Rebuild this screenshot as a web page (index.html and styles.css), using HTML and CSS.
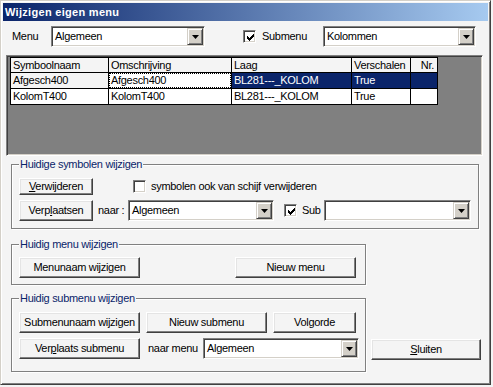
FILE: index.html
```html
<!DOCTYPE html>
<html lang="nl">
<head>
    <meta charset="UTF-8">
    <meta name="viewport" content="width=device-width, initial-scale=1.0">
    <title>Wijzigen eigen menu</title>
    <link rel="stylesheet" href="styles.css">
</head>
<body>
    <div class="window">
        <div class="titlebar">Wijzigen eigen menu</div>

        <div class="client">
            <div class="top-row">
                <span class="label label-menu">Menu</span>
                <div class="combo combo-menu">
                    <span class="combo-text">Algemeen</span>
                    <span class="combo-btn"><svg width="7" height="4" viewBox="0 0 7 4"><path d="M0 0h7l-3.5 4z"/></svg></span>
                </div>
                <span class="check check-submenu"><svg width="9" height="9" viewBox="0 0 9 9" shape-rendering="crispEdges"><path d="M1 3h1v1h1v1h1v-1h1v-1h1v-1h1v-1h1v3h-1v1h-1v1h-1v1h-1v1h-1v-1h-1v-1h-1z"/></svg></span>
                <span class="label label-submenu">Submenu</span>
                <div class="combo combo-submenu">
                    <span class="combo-text">Kolommen</span>
                    <span class="combo-btn"><svg width="7" height="4" viewBox="0 0 7 4"><path d="M0 0h7l-3.5 4z"/></svg></span>
                </div>
            </div>

            <div class="grid-box">
                <div class="grid">
                    <div class="cell head">Symboolnaam</div>
                    <div class="cell head">Omschrijving</div>
                    <div class="cell head">Laag</div>
                    <div class="cell head">Verschalen</div>
                    <div class="cell head nr">Nr.</div>

                    <div class="cell fixed">Afgesch400</div>
                    <div class="cell focus">Afgesch400</div>
                    <div class="cell sel">BL281---_KOLOM</div>
                    <div class="cell sel">True</div>
                    <div class="cell sel"></div>

                    <div class="cell">KolomT400</div>
                    <div class="cell">KolomT400</div>
                    <div class="cell">BL281---_KOLOM</div>
                    <div class="cell">True</div>
                    <div class="cell"></div>
                </div>
            </div>

            <fieldset class="group group-symbols">
                <legend>Huidige symbolen wijzigen</legend>
                <div class="row row-delete">
                    <button class="btn btn-delete"><u>V</u>erwijderen</button>
                    <span class="check check-disk"></span>
                    <span class="label label-disk">symbolen ook van schijf verwijderen</span>
                </div>
                <div class="row row-move">
                    <button class="btn btn-move">Verp<u>l</u>aatsen</button>
                    <span class="label label-naar">naar :</span>
                    <div class="combo combo-naar">
                        <span class="combo-text">Algemeen</span>
                        <span class="combo-btn"><svg width="7" height="4" viewBox="0 0 7 4"><path d="M0 0h7l-3.5 4z"/></svg></span>
                    </div>
                    <span class="check check-sub"><svg width="9" height="9" viewBox="0 0 9 9" shape-rendering="crispEdges"><path d="M1 3h1v1h1v1h1v-1h1v-1h1v-1h1v-1h1v3h-1v1h-1v1h-1v1h-1v1h-1v-1h-1v-1h-1z"/></svg></span>
                    <span class="label label-sub">Sub</span>
                    <div class="combo combo-sub">
                        <span class="combo-text"></span>
                        <span class="combo-btn"><svg width="7" height="4" viewBox="0 0 7 4"><path d="M0 0h7l-3.5 4z"/></svg></span>
                    </div>
                </div>
            </fieldset>

            <div class="lower">
                <div class="lower-groups">
                    <fieldset class="group group-menu">
                        <legend>Huidig menu wijzigen</legend>
                        <div class="row row-spread">
                            <button class="btn btn-wide">Menunaam wijzigen</button>
                            <button class="btn btn-new-menu">Nieuw menu</button>
                        </div>
                    </fieldset>

                    <fieldset class="group group-submenu">
                        <legend>Huidig submenu wijzigen</legend>
                        <div class="row">
                            <button class="btn btn-wide">Submenunaam wijzigen</button>
                            <button class="btn btn-new-sub">Nieuw submenu</button>
                            <button class="btn btn-order">Volgorde</button>
                        </div>
                        <div class="row row-move-sub">
                            <button class="btn btn-wide">Ver<u>p</u>laats submenu</button>
                            <span class="label label-naar-menu">naar menu</span>
                            <div class="combo combo-naar-menu">
                                <span class="combo-text">Algemeen</span>
                                <span class="combo-btn"><svg width="7" height="4" viewBox="0 0 7 4"><path d="M0 0h7l-3.5 4z"/></svg></span>
                            </div>
                        </div>
                    </fieldset>
                </div>
                <button class="btn btn-close"><u>S</u>luiten</button>
            </div>
        </div>
    </div>
</body>
</html>
```

FILE: styles.css
```css
* {
    box-sizing: border-box;
}
body {
    margin: 0;
    background-color: #f4f4f4;
    font: 11px/13px "Liberation Sans", Arial, sans-serif;
    letter-spacing: -0.3px;
    color: #000;
}
.window {
    width: 491px;
    height: 385px;
    padding: 2px;
    background-color: #f4f4f4;
    border: 1px solid;
    border-color: #d4d0c8 #404040 #404040 #d4d0c8;
    box-shadow: inset 1px 1px #fff, inset -1px -1px #808080;
}
.titlebar {
    height: 18px;
    padding-left: 2px;
    line-height: 18px;
    font-weight: bold;
    letter-spacing: 0.3px;
    color: #fff;
    background: linear-gradient(to right, #0a246a, #a6caf0);
}
.label {
    white-space: nowrap;
}

/* top row */
.top-row {
    display: flex;
    align-items: center;
    height: 21px;
    margin: 5px 0 0 9px;
}
.label-menu {
    width: 39px;
}
.combo-menu {
    width: 154px;
}
.check-submenu {
    margin-left: 38px;
}
.label-submenu {
    width: 61px;
    margin-left: 6px;
}
.combo-submenu {
    width: 153px;
}

/* combo box */
.combo {
    display: flex;
    height: 21px;
    background-color: #fff;
    border: 1px solid;
    border-color: #808080 #fff #fff #808080;
    box-shadow: inset 1px 1px #404040, inset -1px -1px #d4d0c8;
    padding: 1px;
}
.combo-text {
    flex: 1;
    padding-left: 2px;
    line-height: 17px;
    white-space: nowrap;
}
.combo-btn {
    width: 16px;
    height: 17px;
    display: flex;
    align-items: center;
    justify-content: center;
    background-color: #d4d0c8;
    border: 1px solid;
    border-color: #d4d0c8 #404040 #404040 #d4d0c8;
    box-shadow: inset 1px 1px #fff, inset -1px -1px #808080;
}

/* checkbox */
.check {
    width: 13px;
    height: 13px;
    flex: none;
    padding: 1px;
    background-color: #fff;
    border: 1px solid;
    border-color: #808080 #fff #fff #808080;
    box-shadow: inset 1px 1px #404040, inset -1px -1px #d4d0c8;
}
.check svg {
    display: block;
    margin: 1px 0 0 1px;
}

/* grid */
.grid-box {
    width: 477px;
    height: 101px;
    margin: 8px 0 0 3px;
    padding: 1px 0 0 3px;
    background-color: #808080;
    border: 1px solid;
    border-color: #808080 #fff #fff #808080;
    box-shadow: inset 1px 1px #404040, inset -1px -1px #d4d0c8;
}
.grid {
    display: grid;
    grid-template-columns: 97px 122px 119px 58px 26px;
    grid-template-rows: 14px 15px 15px;
    gap: 1px;
    padding: 1px;
    width: max-content;
    background-color: #000;
}
.cell {
    padding-left: 2px;
    line-height: 14px;
    white-space: nowrap;
    overflow: hidden;
    background-color: #fff;
}
.head,
.fixed {
    background-color: #f4f4f4;
}
.nr {
    text-align: right;
    padding-right: 3px;
}
.sel {
    background-color: #0a246a;
    color: #fff;
}
.focus {
    outline: 1px dotted #000;
    outline-offset: -1px;
}

/* group boxes */
.group {
    margin: 0;
    min-width: 0;
    border: 1px solid #808080;
    box-shadow: inset 1px 1px #fff, 1px 1px #fff;
}
.group legend {
    padding: 0 1px;
    line-height: 13px;
    color: #0a246a;
    background-color: #f4f4f4;
}
.row {
    display: flex;
    align-items: center;
}
.group-symbols {
    width: 468px;
    margin: 2px 0 0 8px;
    padding: 7px 0 7px 7px;
}
.row-delete {
    height: 17px;
}
.check-disk {
    margin-left: 40px;
}
.label-disk {
    margin-left: 5px;
}
.row-move {
    margin-top: 5px;
}
.label-naar {
    width: 30px;
    margin-left: 5px;
}
.combo-naar {
    width: 146px;
}
.check-sub {
    margin-left: 10px;
}
.label-sub {
    width: 22px;
    margin-left: 5px;
}
.combo-sub {
    width: 147px;
}

/* lower part */
.lower {
    display: flex;
    align-items: flex-end;
    margin: 9px 0 0 8px;
}
.lower-groups {
    width: 355px;
}
.group-menu {
    padding: 6px 0 6px 7px;
}
.row-spread {
    gap: 95px;
}
.group-submenu {
    margin-top: 7px;
    padding: 7px 0 12px 7px;
}
.group-submenu .row {
    gap: 6px;
}
.group-submenu .row-move-sub {
    margin-top: 5px;
    gap: 0;
}
.label-naar-menu {
    width: 55px;
    margin-left: 8px;
}
.combo-naar-menu {
    width: 156px;
}

/* buttons */
.btn {
    height: 21px;
    padding: 0;
    font: inherit;
    letter-spacing: inherit;
    color: #000;
    background-color: #f4f4f4;
    border: 1px solid;
    border-color: #fff #404040 #404040 #fff;
    box-shadow: inset -1px -1px #808080, inset 1px 1px #e4e4e4;
    white-space: nowrap;
}
.btn-delete,
.btn-move {
    width: 74px;
}
.btn-delete {
    height: 17px;
}
.btn-wide,
.btn-new-menu,
.btn-new-sub {
    width: 121px;
}
.btn-order {
    width: 83px;
}
.btn-close {
    width: 110px;
    margin: 0 0 12px 5px;
}
```
